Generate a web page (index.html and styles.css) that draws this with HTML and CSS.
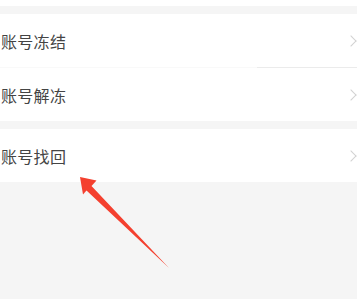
FILE: index.html
```html
<!DOCTYPE html>
<html lang="zh-CN">
<head>
    <meta charset="UTF-8">
    <meta name="viewport" content="width=device-width, initial-scale=1.0">
    <title>账号安全</title>
    <link rel="stylesheet" href="styles.css">
</head>
<body>
    <div class="top-strip"></div>

    <div class="group">
        <div class="row">
            <span class="label">账号冻结</span>
            <span class="chevron"></span>
        </div>
        <div class="divider"></div>
        <div class="row">
            <span class="label">账号解冻</span>
            <span class="chevron"></span>
        </div>
    </div>

    <div class="group">
        <div class="row">
            <span class="label">账号找回</span>
            <span class="chevron"></span>
        </div>
    </div>

    <!-- annotation arrow drawn over the page -->
    <svg class="arrow" width="357" height="299" viewBox="0 0 357 299">
        <path d="M80 177 L96.5 180.5 L91.5 186 L169 268 L86.5 190.5 L83 194.5 Z" fill="#f4402f"/>
    </svg>
</body>
</html>
```

FILE: styles.css
```css
body {
    margin: 0;
    padding: 0;
    height: 299px;
    overflow: hidden;
    background-color: #f5f5f5;
    font-family: 'Noto Sans CJK SC', 'Noto Sans', sans-serif;
}

.top-strip {
    height: 6px;
    background-color: #ffffff;
}

.group {
    margin-top: 8px;
    background-color: #ffffff;
}

.row {
    height: 53px;
    display: flex;
    align-items: center;
    justify-content: space-between;
    padding-left: 1px;
}

.label {
    font-size: 16px;
    color: #444444;
    letter-spacing: 0.3px;
}

.chevron {
    width: 7px;
    height: 7px;
    border-top: 1px solid #d2d2d2;
    border-right: 1px solid #d2d2d2;
    transform: rotate(45deg);
    margin-right: 2px;
}

.divider {
    height: 1px;
    background: linear-gradient(to right, #f9f9f9 0, #f9f9f9 257px, #ebebeb 257px);
}

.arrow {
    position: absolute;
    left: 0;
    top: 0;
}
```
